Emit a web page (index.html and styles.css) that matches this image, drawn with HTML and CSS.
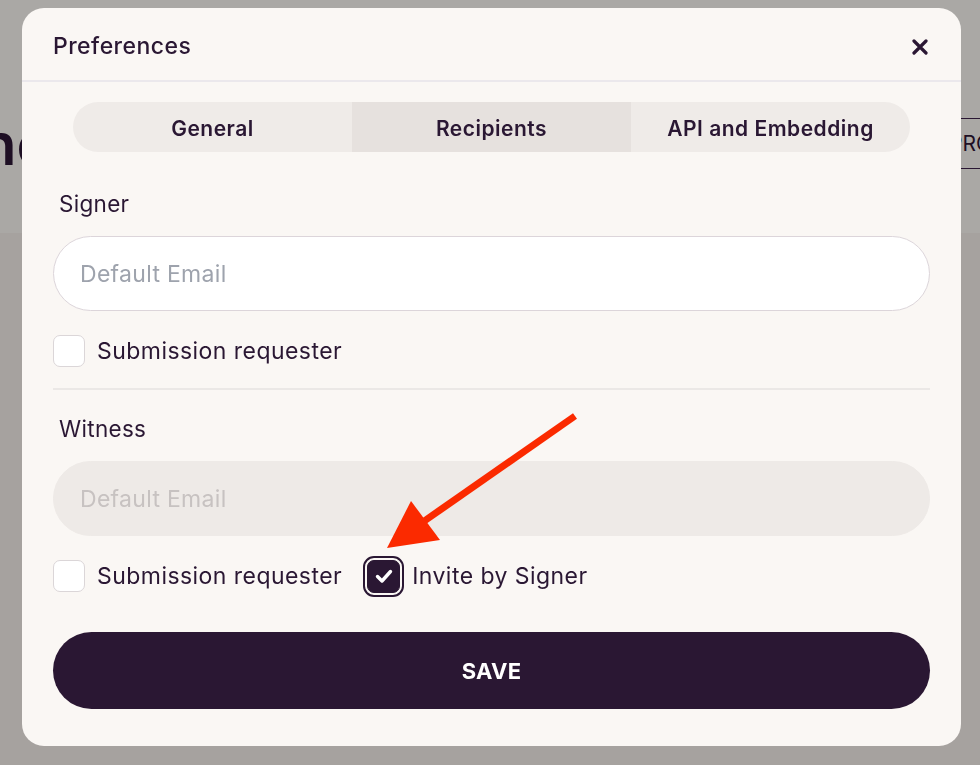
FILE: index.html
```html
<!DOCTYPE html>
<html lang="en">
<head>
<meta charset="utf-8">
<title>Preferences</title>
<link rel="stylesheet" href="styles.css">
</head>
<body>
<div class="page">
  <div class="page-top">
    <h1 class="page-title">nc</h1>
    <span class="page-btn">PRO</span>
  </div>
  <div class="page-rest"></div>
</div>

<div class="overlay">
  <div class="modal">
    <div class="modal-header">
      <span class="modal-title">Preferences</span>
      <span class="modal-close" aria-label="Close">
        <svg width="16" height="16" viewBox="0 0 16 16"><path d="M2 2 L14 14 M14 2 L2 14" stroke="#2a1733" stroke-width="3.2" stroke-linecap="round" fill="none"/></svg>
      </span>
    </div>
    <div class="modal-body">
      <div class="tabs">
        <span class="tab">General</span>
        <span class="tab tab-active">Recipients</span>
        <span class="tab">API and Embedding</span>
      </div>

      <div class="field">
        <div class="field-label">Signer</div>
        <input class="field-input" type="text" placeholder="Default Email">
        <div class="checks">
          <label class="check"><span class="box"></span><span>Submission requester</span></label>
        </div>
      </div>

      <div class="divider"></div>

      <div class="field">
        <div class="field-label">Witness</div>
        <input class="field-input field-disabled" type="text" placeholder="Default Email" disabled>
        <div class="checks">
          <label class="check"><span class="box"></span><span>Submission requester</span></label>
          <label class="check check-on"><span class="box box-on">
            <svg width="22" height="22" viewBox="0 0 22 22"><path d="M4.5 11.5 L9 16 L17.5 6.5" stroke="#ffffff" stroke-width="3.4" stroke-linecap="round" stroke-linejoin="round" fill="none"/></svg>
          </span><span>Invite by Signer</span></label>
        </div>
      </div>

      <button class="save-btn">SAVE</button>
    </div>
  </div>

  <svg class="annot-arrow" width="980" height="765" viewBox="0 0 980 765">
    <line x1="575" y1="416" x2="420" y2="524" stroke="#fb2a00" stroke-width="7"/>
    <polygon points="387,548 411,501 440,540" fill="#fb2a00"/>
  </svg>
</div>
</body>
</html>
```

FILE: styles.css
```css
* { box-sizing: border-box; }

html, body {
  margin: 0;
  padding: 0;
  width: 980px;
  height: 765px;
  overflow: hidden;
  font-family: Inter, "Liberation Sans", sans-serif;
  color: #2a1733;
}

.page {
  display: flex;
  flex-direction: column;
  height: 765px;
}

.page-top {
  height: 233px;
  background: #aaa8a5;
  display: flex;
  align-items: flex-start;
  justify-content: space-between;
  overflow: hidden;
}

.page-title {
  margin: 115px 0 0 -19px;
  font-size: 58px;
  font-weight: 600;
  color: #1e0f24;
  line-height: 1;
}

.page-btn {
  width: 120px;
  height: 51px;
  margin: 118px -85px 0 0;
  border-top: 1.5px solid #2a1733;
  border-bottom: 1.5px solid #2a1733;
  border-left: 1.5px solid #2a1733;
  display: flex;
  align-items: center;
  padding-left: 3px;
  font-size: 21px;
  color: #1e0f24;
}

.page-rest {
  flex: 1;
  background: #a6a29f;
}

.overlay {
  position: fixed;
  inset: 0;
}

.modal {
  margin: 8px 0 0 22px;
  width: 939px;
  height: 738px;
  background: #faf7f4;
  border-radius: 22px;
  display: flex;
  flex-direction: column;
  overflow: hidden;
}

.modal-header {
  height: 74px;
  border-bottom: 2px solid #ebe8ec;
  display: flex;
  align-items: center;
  justify-content: space-between;
  padding: 0 33px 0 31px;
}

.modal-title {
  font-size: 23px;
  font-weight: 500;
  letter-spacing: 0.45px;
  padding-top: 4px;
}

.modal-close {
  display: flex;
  padding-top: 6px;
}

.modal-body {
  padding: 20px 31px 0 31px;
  display: flex;
  flex-direction: column;
}

.tabs {
  margin: 0 20px;
  height: 50px;
  border-radius: 25px;
  background: #efebe8;
  display: grid;
  grid-template-columns: 1fr 1fr 1fr;
  overflow: hidden;
}

.tab {
  display: flex;
  align-items: center;
  justify-content: center;
  font-size: 21px;
  font-weight: 600;
  letter-spacing: 0.5px;
  padding-top: 2px;
}

.tab-active {
  background: #e6e1de;
}

.field {
  display: flex;
  flex-direction: column;
}

.field-label {
  font-size: 22.5px;
  font-weight: 400;
  letter-spacing: 0.3px;
  padding-left: 6px;
  margin-top: 38px;
  height: 28px;
  line-height: 28px;
}

.field-input {
  margin-top: 18px;
  height: 75px;
  border-radius: 38px;
  border: 1.5px solid #dcd5da;
  background: #ffffff;
  padding: 0 26px;
  font-family: Inter, "Liberation Sans", sans-serif;
  font-size: 23px;
  letter-spacing: 0.3px;
  color: #2a1733;
  outline: none;
  width: 100%;
}

.field-input::placeholder {
  color: #9ea3ad;
}

.field-disabled {
  background: #eeeae7;
  border-color: #eeeae7;
}

.field-disabled::placeholder {
  color: #c7c2c1;
}

.checks {
  display: flex;
  align-items: center;
  gap: 21px;
  margin-top: 24px;
  height: 32px;
}

.check {
  display: flex;
  align-items: center;
  gap: 12px;
  font-size: 23px;
  letter-spacing: 0.45px;
}

.box {
  width: 32px;
  height: 32px;
  border-radius: 7px;
  border: 1.5px solid #dbd6d8;
  background: #ffffff;
  display: flex;
  align-items: center;
  justify-content: center;
}

.box-on {
  width: 33px;
  height: 33px;
  background: #2a1733;
  border-color: #2a1733;
  outline: 2.5px solid #2a1733;
  outline-offset: 2.5px;
  margin-left: 4px;
}

.divider {
  height: 2px;
  background: #ebe8e6;
  margin-top: 21px;
}

.modal-body > .divider + .field .field-label {
  margin-top: 25px;
}

.save-btn {
  margin-top: 40px;
  height: 77px;
  border: none;
  border-radius: 39px;
  background: #2a1733;
  color: #ffffff;
  font-family: Inter, "Liberation Sans", sans-serif;
  font-size: 22px;
  font-weight: 700;
  letter-spacing: 0.3px;
  width: 100%;
}

.annot-arrow {
  position: absolute;
  left: 0;
  top: 0;
  pointer-events: none;
}
```
